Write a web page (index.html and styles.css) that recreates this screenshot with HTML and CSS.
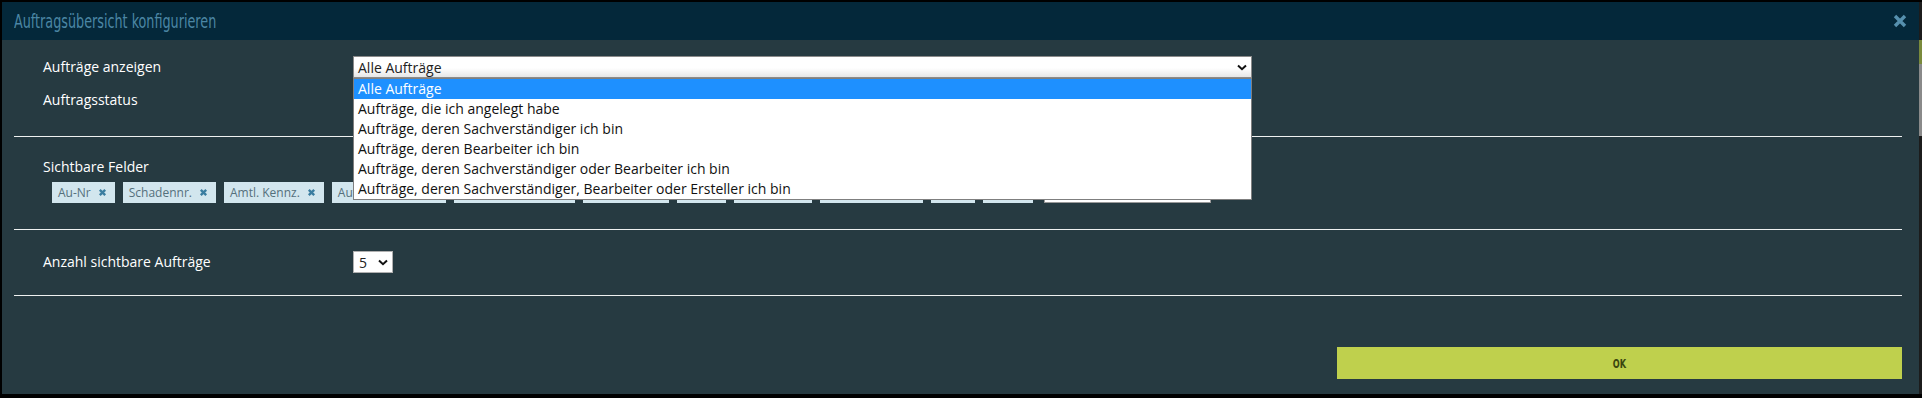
FILE: index.html
```html
<!DOCTYPE html>
<html lang="de">
<head>
    <meta charset="UTF-8">
    <meta name="viewport" content="width=device-width, initial-scale=1.0">
    <title>Auftragsübersicht konfigurieren</title>
    <link rel="stylesheet" href="styles.css">
</head>
<body>

    <div class="window">
        <div class="modal">
            <div class="modal-header">
                <h1 class="modal-title"><span>Auftragsübersicht konfigurieren</span></h1>
                <button class="close-button" title="Schließen">
                    <svg width="14" height="14" viewBox="0 0 14 14"><path d="M2 2 L12 12 M12 2 L2 12" stroke="currentColor" stroke-width="3.4" fill="none"/></svg>
                </button>
            </div>

            <div class="modal-body">
                <div class="section">
                    <div class="form-row">
                        <label class="form-label">Aufträge anzeigen</label>
                        <div class="select-wrap">
                            <div class="select-box select-wide">
                                <span>Alle Aufträge</span>
                                <svg width="10" height="7" viewBox="0 0 10 7"><path d="M1 1.5 L5 5.2 L9 1.5" stroke="#111" stroke-width="2" fill="none"/></svg>
                            </div>
                            <ul class="select-list">
                                <li class="selected">Alle Aufträge</li>
                                <li>Aufträge, die ich angelegt habe</li>
                                <li>Aufträge, deren Sachverständiger ich bin</li>
                                <li>Aufträge, deren Bearbeiter ich bin</li>
                                <li>Aufträge, deren Sachverständiger oder Bearbeiter ich bin</li>
                                <li>Aufträge, deren Sachverständiger, Bearbeiter oder Ersteller ich bin</li>
                            </ul>
                        </div>
                    </div>
                    <div class="form-row">
                        <label class="form-label">Auftragsstatus</label>
                    </div>
                </div>

                <div class="section">
                    <div class="section-label">Sichtbare Felder</div>
                    <div class="tag-list">
                        <span class="tag">Au-Nr<svg viewBox="0 0 10 10"><path d="M2 2 L8 8 M8 2 L2 8"/></svg></span>
                        <span class="tag">Schadennr.<svg viewBox="0 0 10 10"><path d="M2 2 L8 8 M8 2 L2 8"/></svg></span>
                        <span class="tag">Amtl. Kennz.<svg viewBox="0 0 10 10"><path d="M2 2 L8 8 M8 2 L2 8"/></svg></span>
                        <span class="tag">Auftragsdatum<svg viewBox="0 0 10 10"><path d="M2 2 L8 8 M8 2 L2 8"/></svg></span>
                        <span class="tag">Versicherungsnr<svg viewBox="0 0 10 10"><path d="M2 2 L8 8 M8 2 L2 8"/></svg></span>
                        <span class="tag">Gutachter<svg viewBox="0 0 10 10"><path d="M2 2 L8 8 M8 2 L2 8"/></svg></span>
                        <span class="tag">Ort<svg viewBox="0 0 10 10"><path d="M2 2 L8 8 M8 2 L2 8"/></svg></span>
                        <span class="tag">Schaden<svg viewBox="0 0 10 10"><path d="M2 2 L8 8 M8 2 L2 8"/></svg></span>
                        <span class="tag">Versicherung<svg viewBox="0 0 10 10"><path d="M2 2 L8 8 M8 2 L2 8"/></svg></span>
                        <span class="tag">SV<svg viewBox="0 0 10 10"><path d="M2 2 L8 8 M8 2 L2 8"/></svg></span>
                        <span class="tag">Typ<svg viewBox="0 0 10 10"><path d="M2 2 L8 8 M8 2 L2 8"/></svg></span>
                        <span class="tag-input"></span>
                    </div>
                </div>

                <div class="section section-last">
                    <div class="form-row">
                        <label class="form-label">Anzahl sichtbare Aufträge</label>
                        <div class="select-box select-small">
                            <span>5</span>
                            <svg width="10" height="7" viewBox="0 0 10 7"><path d="M1 1.5 L5 5.2 L9 1.5" stroke="#111" stroke-width="2" fill="none"/></svg>
                        </div>
                    </div>
                </div>

                <div class="modal-footer">
                    <button class="ok-button"><span>OK</span></button>
                </div>
            </div>
        </div>
        <div class="scrollbar"><div class="scrollbar-thumb"></div></div>
    </div>

</body>
</html>
```

FILE: styles.css
```css
html, body {
    margin: 0;
    padding: 0;
    height: 100%;
}

body {
    font-family: "Open Sans", Arial, sans-serif;
    background-color: #000;
    overflow: hidden;
}

.window {
    display: flex;
    height: 398px;
    box-sizing: border-box;
    padding: 2px 0 4px 2px;
}

.modal {
    flex: 1;
    display: flex;
    flex-direction: column;
    background-color: #263a41;
}

.scrollbar {
    width: 3px;
    background-color: #1c1c1c;
}

.scrollbar-thumb {
    margin-top: 38px;
    height: 72px;
    background-color: #8a8a8a;
    border-top: 24px solid #7a8a3c;
}

/* header */
.modal-header {
    height: 38px;
    display: flex;
    align-items: center;
    justify-content: space-between;
    padding: 0 12px 0 12px;
    background-color: #04283a;
}

.modal-title {
    margin: 0;
    font-family: "DejaVu Sans Condensed", "DejaVu Sans", sans-serif;
    font-weight: normal;
    font-size: 20px;
    color: #4b86a4;
    line-height: 38px;
}

.modal-title span {
    display: inline-block;
    transform: scaleX(0.71);
    transform-origin: left center;
}

.close-button {
    border: none;
    background: none;
    padding: 0;
    color: #5690ae;
    display: flex;
    cursor: pointer;
}

/* body */
.modal-body {
    flex: 1;
    display: flex;
    flex-direction: column;
    padding: 0 17px 0 12px;
}

.section {
    padding: 16px 0 25px 29px;
    border-bottom: 1px solid #eef0f0;
}

.section + .section {
    padding-top: 20px;
    padding-bottom: 26px;
}

.section.section-last {
    padding-top: 21px;
    padding-bottom: 22px;
}

.form-row {
    display: flex;
    align-items: center;
    height: 22px;
}

.form-row + .form-row {
    margin-top: 11px;
}

.form-label {
    width: 310px;
    flex-shrink: 0;
    color: #fff;
    font-size: 14px;
    line-height: 22px;
}

.section-label {
    color: #fff;
    font-size: 14px;
    line-height: 20px;
}

/* select */
.select-wrap {
    position: relative;
}

.select-box {
    display: flex;
    align-items: center;
    justify-content: space-between;
    box-sizing: border-box;
    height: 22px;
    padding: 0 4px 0 5px;
    background: linear-gradient(#fff 55%, #e6e6e6);
    border: 1px solid #8a8a8a;
    font-size: 14px;
    color: #222;
}

.select-wide {
    width: 899px;
    padding-left: 4px;
}

.select-small {
    width: 40px;
    background: #fff;
    border-color: #b0b0b0;
}

.select-list {
    position: absolute;
    top: 22px;
    left: 0;
    z-index: 10;
    width: 899px;
    box-sizing: border-box;
    margin: 0;
    padding: 0;
    list-style-type: none;
    background-color: #fff;
    border: 1px solid #7f7f7f;
    font-size: 14px;
    color: #111;
}

.select-list li {
    height: 20px;
    line-height: 20px;
    padding-left: 4px;
    white-space: nowrap;
}

.select-list li.selected {
    background-color: #1e90ff;
    color: #fff;
}

/* tags */
.tag-list {
    display: flex;
    flex-wrap: wrap;
    gap: 8px;
    margin: 5px 0 0 9px;
}

.tag {
    display: flex;
    align-items: center;
    height: 21px;
    padding: 0 8px 0 6px;
    background-color: #d2e6ee;
    color: #55707c;
    font-size: 12px;
    white-space: nowrap;
}

.tag svg {
    width: 9px;
    height: 9px;
    margin-left: 7px;
    stroke: #3a7da0;
    stroke-width: 2.6;
    fill: none;
}

.tag-input {
    width: 167px;
    height: 21px;
    box-sizing: border-box;
    margin-left: 3px;
    background-color: #fff;
    border: 1px solid #999;
}

/* footer */
.modal-footer {
    display: flex;
    justify-content: flex-end;
    padding-top: 51px;
}

.ok-button {
    width: 565px;
    height: 32px;
    border: none;
    background-color: #bfd04d;
    color: #3a470f;
    font-family: "DejaVu Sans Condensed", "DejaVu Sans", sans-serif;
    font-size: 13px;
    font-weight: bold;
    cursor: pointer;
}

.ok-button span {
    display: inline-block;
    transform: scaleX(0.7);
}
```
